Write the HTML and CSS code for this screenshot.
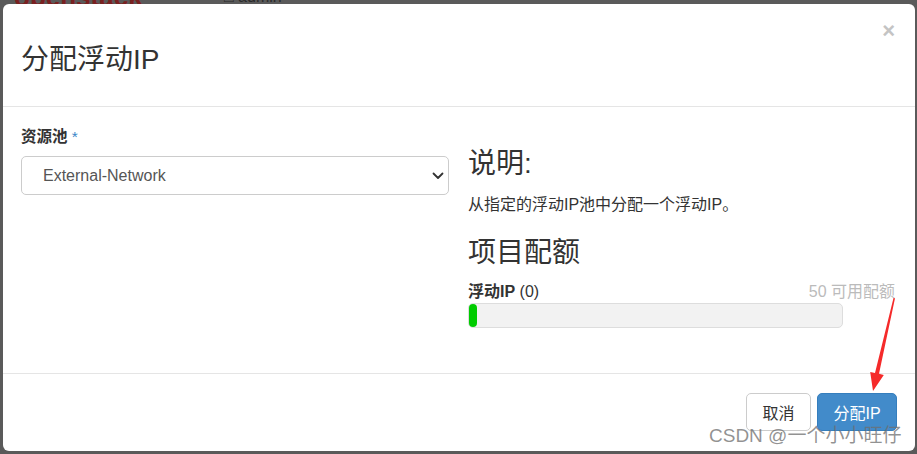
FILE: index.html
```html
<!DOCTYPE html>
<html lang="zh-CN">
<head>
<meta charset="utf-8">
<title>分配浮动IP</title>
<link rel="stylesheet" href="styles.css">
</head>
<body>
<div class="page-top">
  <span class="logo">openstack</span>
  <span class="user">&#9633; admin</span>
</div>
<div class="modal">
  <div class="modal-header">
    <h3 class="modal-title">分配浮动IP</h3>
    <button class="close" type="button">&times;</button>
  </div>
  <div class="modal-body">
    <div class="col-left">
      <label class="field-label">资源池 <span class="req">*</span></label>
      <div class="select-wrap">
        <select class="select">
          <option>External-Network</option>
        </select>
        <svg class="chev" width="12" height="8" viewBox="0 0 12 8"><path d="M1.5 1.5 L6 6 L10.5 1.5" fill="none" stroke="#333" stroke-width="1.8" stroke-linecap="round" stroke-linejoin="round"/></svg>
      </div>
    </div>
    <div class="col-right">
      <h3 class="sec-title">说明:</h3>
      <p class="desc">从指定的浮动IP池中分配一个浮动IP。</p>
      <h3 class="sec-title quota-title">项目配额</h3>
      <div class="quota-row">
        <span class="quota-name"><b>浮动IP</b> (0)</span>
        <span class="quota-avail">50 可用配额</span>
      </div>
      <div class="progress"><div class="progress-bar" style="width:8px"></div></div>
    </div>
  </div>
  <div class="modal-footer">
    <button class="btn btn-default" type="button">取消</button>
    <button class="btn btn-primary" type="button">分配IP</button>
  </div>
</div>
<svg class="arrow" width="917" height="454" viewBox="0 0 917 454"><polygon points="893.5,298 895,298.3 879,373.8 883.8,374.9 873,391 870.2,371.9 875,373" fill="#f52a2a"/></svg>
<div class="watermark">CSDN @一个小小旺仔</div>
</body>
</html>
```

FILE: styles.css
```css
* { box-sizing: border-box; }
html, body { margin: 0; padding: 0; }
body {
  width: 917px;
  height: 454px;
  overflow: hidden;
  background: #5a5a5a;
  font-family: "Liberation Sans", "Noto Sans CJK SC", sans-serif;
  color: #333;
  position: relative;
}
.page-top {
  height: 4px;
  overflow: hidden;
  position: relative;
}
.logo {
  position: absolute;
  left: 14px;
  top: -18px;
  font-size: 26px;
  font-weight: bold;
  color: #7a2020;
}
.user {
  position: absolute;
  left: 224px;
  top: -12px;
  font-size: 16px;
  color: #2a2a2a;
}
.modal {
  margin-left: 3px;
  width: 912px;
  height: 447px;
  background: #fff;
  border-radius: 6px;
  display: flex;
  flex-direction: column;
}
.modal-header {
  display: flex;
  justify-content: space-between;
  align-items: flex-start;
  padding: 17px 20px 0 18px;
  height: 103px;
  border-bottom: 1px solid #e5e5e5;
}
.modal-title {
  margin: 23px 0 0 0;
  font-size: 28px;
  line-height: 31px;
  font-weight: normal;
  color: #333;
}
.close {
  border: 0;
  background: none;
  padding: 0;
  font-family: "Liberation Sans", sans-serif;
  font-size: 22px;
  line-height: 20px;
  height: 20px;
  font-weight: bold;
  color: #c4c4c4;
}
.modal-body {
  flex: 1;
  display: grid;
  grid-template-columns: 428px 427px;
  column-gap: 19px;
  padding: 19px 20px 0 18px;
}
.field-label {
  display: block;
  font-size: 15.5px;
  line-height: 22px;
  font-weight: bold;
  color: #333;
  margin-bottom: 8px;
}
.req { color: #3a87c8; font-weight: normal; }
.select-wrap { position: relative; }
.select {
  display: block;
  width: 428px;
  height: 39px;
  appearance: none;
  -webkit-appearance: none;
  border: 1px solid #ccc;
  border-radius: 5px;
  background: #fff;
  padding: 0 30px 0 21px;
  font-family: "Liberation Sans", sans-serif;
  font-size: 16px;
  color: #555;
}
.chev {
  position: absolute;
  right: 5px;
  top: 16px;
}
.sec-title {
  margin: 22px 0 0 0;
  font-size: 28px;
  line-height: 31px;
  font-weight: normal;
  color: #333;
}
.desc {
  margin: 15px 0 0 0;
  font-size: 16px;
  line-height: 22px;
  color: #333;
}
.quota-title { margin-top: 21px; }
.quota-row {
  display: flex;
  justify-content: space-between;
  margin-top: 13px;
  font-size: 16px;
  line-height: 22px;
}
.quota-name { color: #333; }
.quota-avail { color: #bbb; }
.progress {
  width: 375px;
  height: 25px;
  background: #f2f2f2;
  border: 1px solid #ddd;
  border-radius: 5px;
}
.progress-bar {
  height: 23px;
  background: #0c0;
  border-radius: 5px;
}
.modal-footer {
  height: 78px;
  border-top: 1px solid #e5e5e5;
  display: flex;
  justify-content: flex-end;
  align-items: flex-start;
  gap: 6px;
  padding: 19px 18px 0 0;
}
.btn {
  height: 38px;
  border-radius: 5px;
  font-family: "Liberation Sans", "Noto Sans CJK SC", sans-serif;
  font-size: 16px;
  padding: 0;
}
.btn-default {
  width: 65px;
  background: #fff;
  border: 1px solid #ccc;
  color: #333;
}
.btn-primary {
  width: 80px;
  background: #428bca;
  border: 1px solid #357ebd;
  color: #fff;
}
.arrow {
  position: absolute;
  left: 0;
  top: 0;
  pointer-events: none;
}
.watermark {
  position: absolute;
  left: 709px;
  top: 424px;
  font-size: 19px;
  line-height: 24px;
  color: rgba(110, 110, 110, 0.75);
  white-space: nowrap;
}
```
